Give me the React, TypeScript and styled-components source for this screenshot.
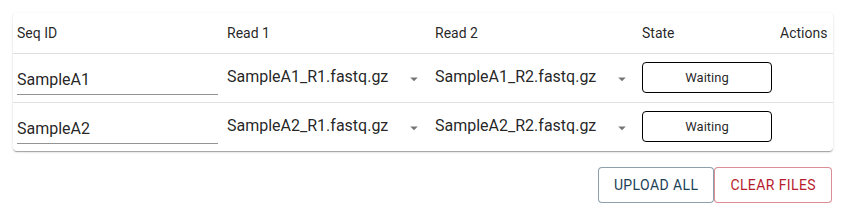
import React from 'react';
import styled, { createGlobalStyle } from 'styled-components';

const GlobalStyle = createGlobalStyle`
  body {
    margin: 0;
    background: #fff;
    font-family: Roboto, "Liberation Sans", sans-serif;
    color: rgba(0, 0, 0, 0.87);
  }
`;

const Page = styled.div`
  padding: 13px 29px 0 13px;
`;

const Paper = styled.div`
  background: #fff;
  border-radius: 4px;
  box-shadow: 0 2px 1px -1px rgba(0,0,0,0.2), 0 1px 1px 0 rgba(0,0,0,0.14), 0 1px 3px 0 rgba(0,0,0,0.12);
`;

const Table = styled.table`
  width: 100%;
  border-collapse: collapse;
  table-layout: fixed;
`;

const HeadCell = styled.th<{ $w: number }>`
  box-sizing: border-box;
  width: ${p => p.$w}px;
  height: 40px;
  padding: 0 0 0 4px;
  text-align: left;
  font-weight: 400;
  font-size: 14px;
  white-space: nowrap;
  color: rgba(0, 0, 0, 0.87);
  border-bottom: 1px solid rgba(224, 224, 224, 1);
`;

const Row = styled.tr<{ $last?: boolean }>`
  td {
    border-bottom: ${p => (p.$last ? 'none' : '1px solid rgba(224, 224, 224, 1)')};
  }
`;

const Cell = styled.td`
  box-sizing: border-box;
  height: 49px;
  padding: 0 0 0 4px;
  vertical-align: middle;
`;

const TextField = styled.div`
  width: 201px;
  height: 31px;
  margin-top: 3px;
  border-bottom: 1px solid rgba(0, 0, 0, 0.42);
  font-size: 16px;
  line-height: 31px;
  box-sizing: border-box;
`;

const Select = styled.div`
  display: flex;
  align-items: center;
  width: 196px;
  height: 30px;
  font-size: 16px;
  margin-top: -2px;
`;

const SelectText = styled.span`
  flex: 1;
`;

const Arrow = styled.svg`
  width: 18px;
  height: 18px;
  margin-top: 5px;
  fill: rgba(0, 0, 0, 0.54);
`;

const StateBox = styled.div`
  width: 130px;
  height: 31px;
  box-sizing: border-box;
  border: 1px solid #000;
  border-radius: 4px;
  display: flex;
  align-items: center;
  justify-content: center;
  font-size: 13px;
`;

const Actions = styled.div`
  display: flex;
  justify-content: flex-end;
  margin-top: 16px;
  padding-right: 1px;
`;

const OutlineButton = styled.button<{ $color: string; $border: string }>`
  height: 36px;
  padding: 0 15px;
  font-family: Roboto, "Liberation Sans", sans-serif;
  font-size: 14px;
  font-weight: 400;
  letter-spacing: 0.02857em;
  text-transform: uppercase;
  background: #fff;
  color: ${p => p.$color};
  border: 1px solid ${p => p.$border};
  border-radius: 4px;
  cursor: pointer;
`;

const rows = [
  { id: 'SampleA1', r1: 'SampleA1_R1.fastq.gz', r2: 'SampleA1_R2.fastq.gz' },
  { id: 'SampleA2', r1: 'SampleA2_R1.fastq.gz', r2: 'SampleA2_R2.fastq.gz' },
];

function DropArrow() {
  return (
    <Arrow viewBox="0 0 24 24">
      <path d="M7 10l5 5 5-5z" />
    </Arrow>
  );
}

export default function App() {
  return (
    <Page>
      <GlobalStyle />
      <Paper>
        <Table>
          <thead>
            <tr>
              <HeadCell $w={210}>Seq ID</HeadCell>
              <HeadCell $w={208}>Read 1</HeadCell>
              <HeadCell $w={207}>Read 2</HeadCell>
              <HeadCell $w={138}>State</HeadCell>
              <HeadCell $w={57}>Actions</HeadCell>
            </tr>
          </thead>
          <tbody>
            {rows.map((r, i) => (
              <Row key={r.id} $last={i === rows.length - 1}>
                <Cell>
                  <TextField>{r.id}</TextField>
                </Cell>
                <Cell>
                  <Select>
                    <SelectText>{r.r1}</SelectText>
                    <DropArrow />
                  </Select>
                </Cell>
                <Cell>
                  <Select>
                    <SelectText>{r.r2}</SelectText>
                    <DropArrow />
                  </Select>
                </Cell>
                <Cell>
                  <StateBox>Waiting</StateBox>
                </Cell>
                <Cell />
              </Row>
            ))}
          </tbody>
        </Table>
      </Paper>
      <Actions>
        <OutlineButton $color="#1c4257" $border="rgba(28, 66, 87, 0.5)">Upload all</OutlineButton>
        <OutlineButton $color="#b71c2c" $border="rgba(183, 28, 44, 0.5)">Clear files</OutlineButton>
      </Actions>
    </Page>
  );
}
